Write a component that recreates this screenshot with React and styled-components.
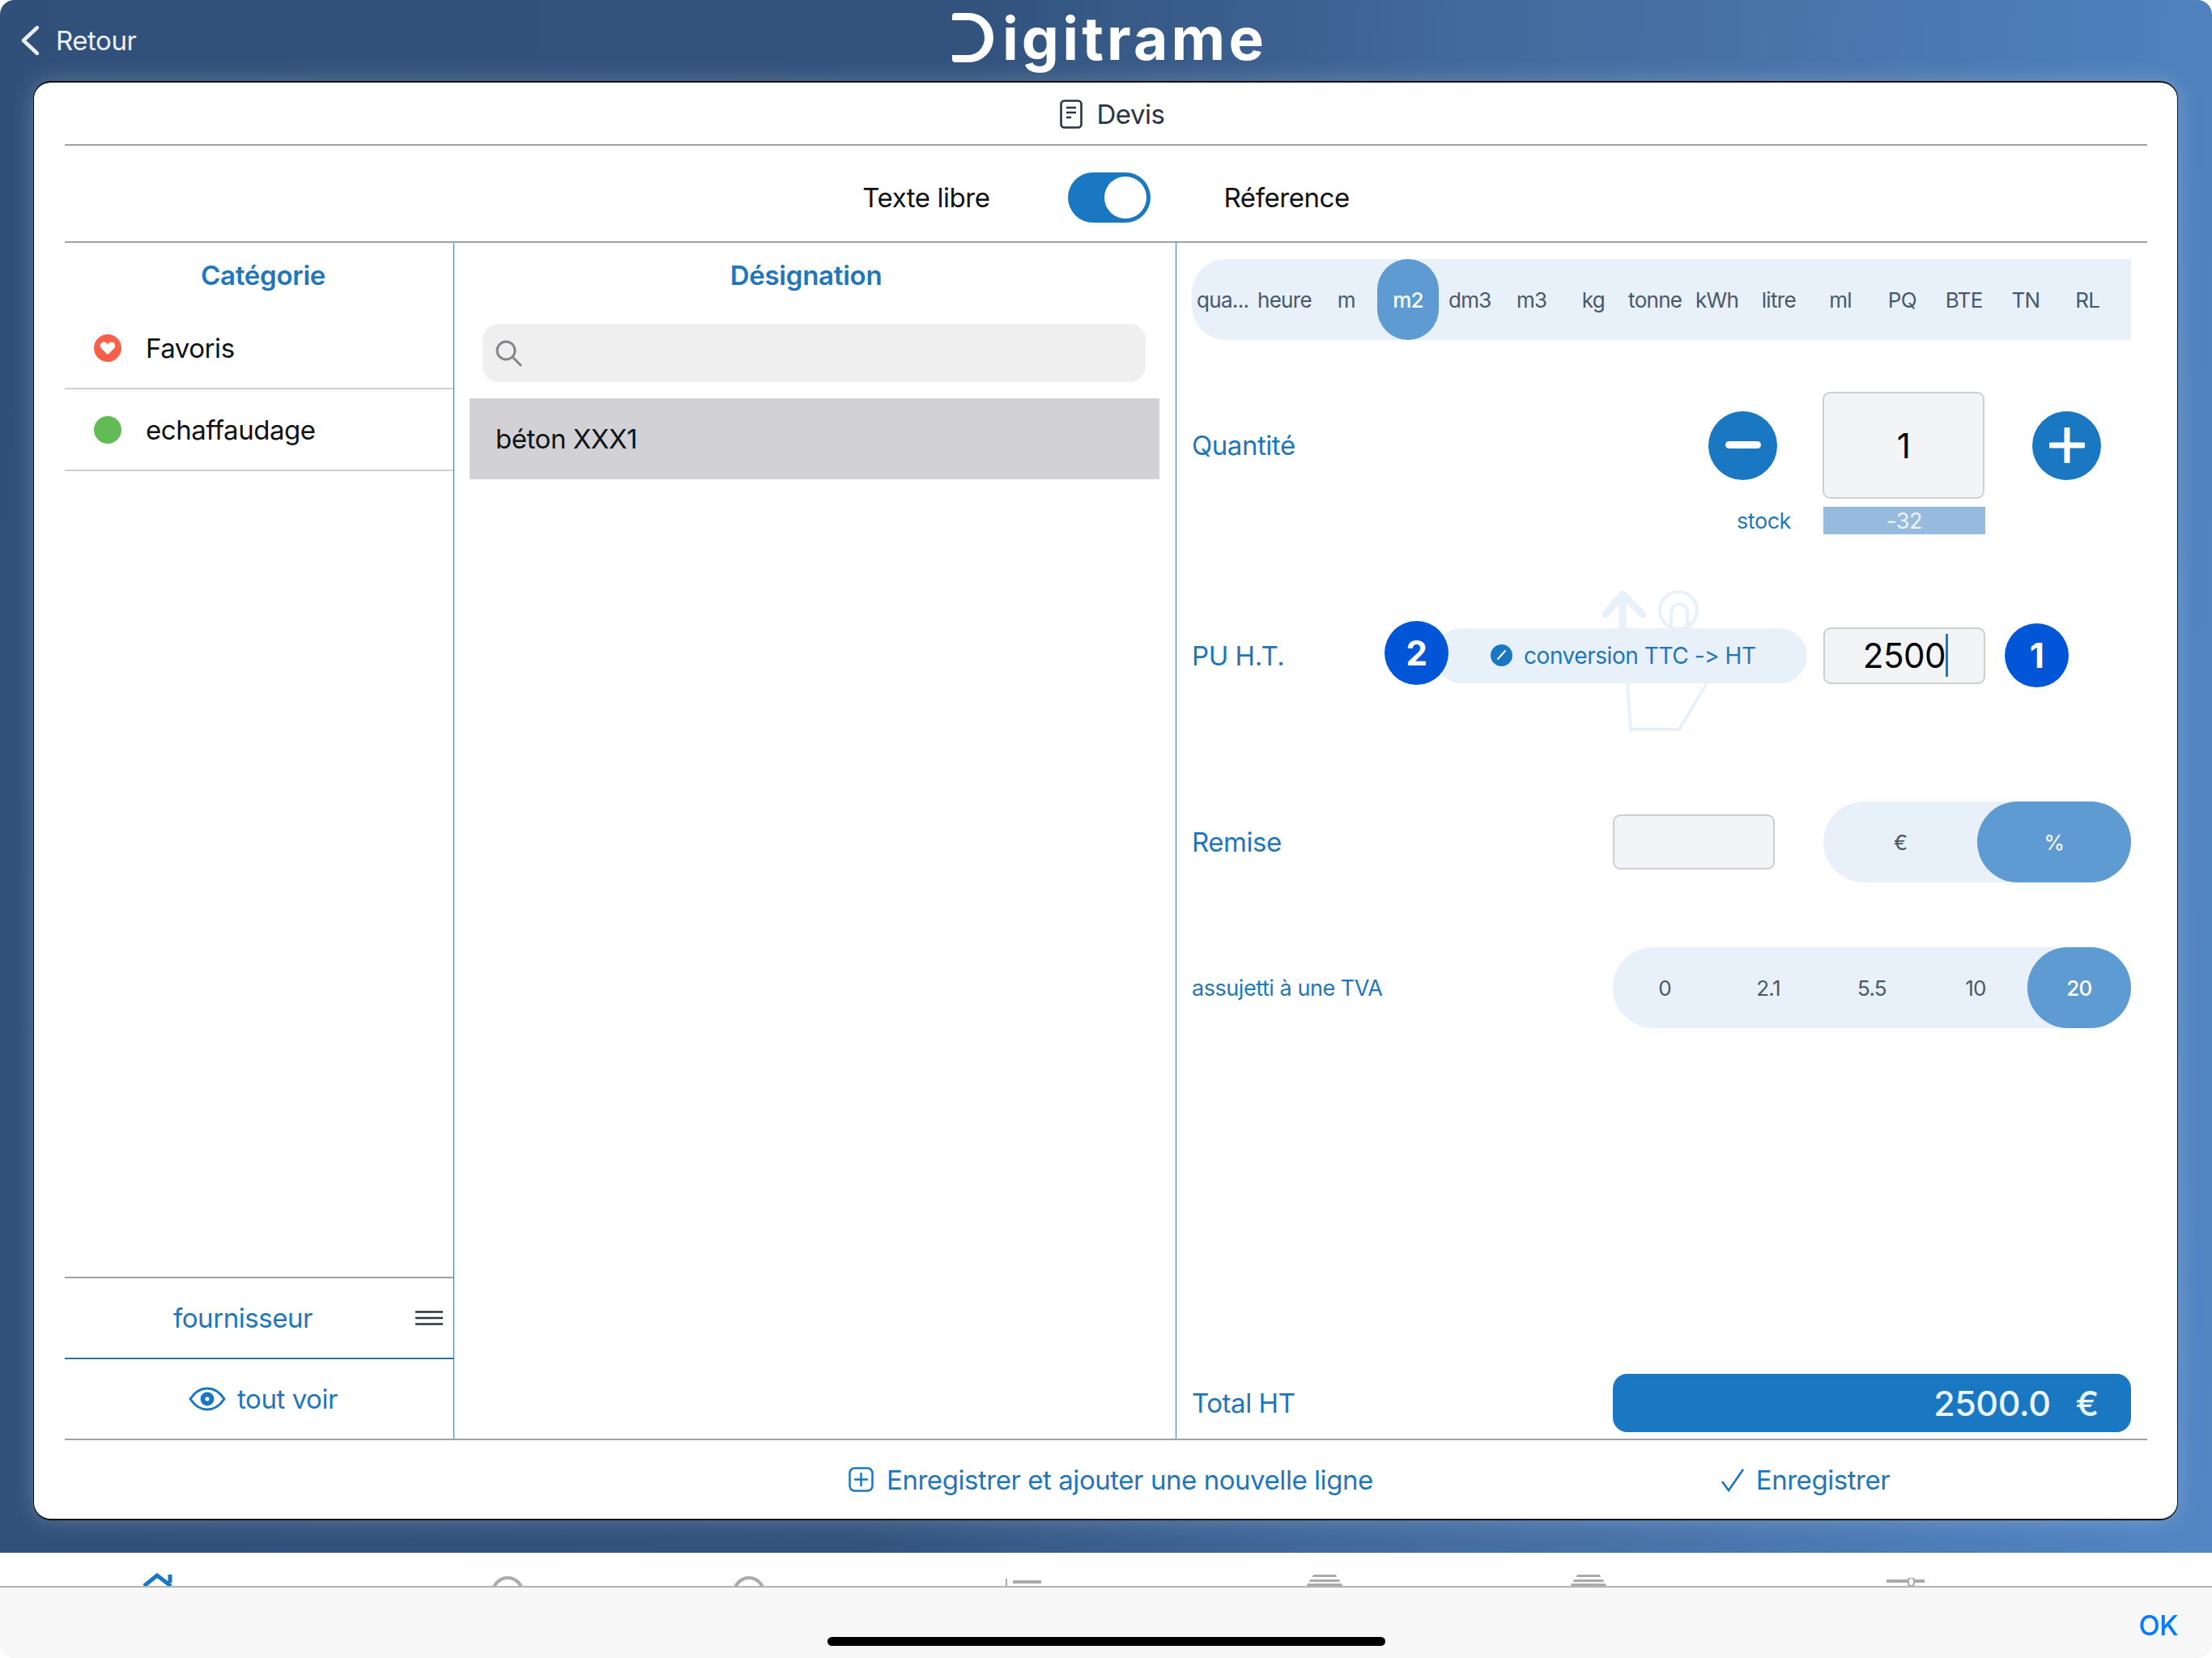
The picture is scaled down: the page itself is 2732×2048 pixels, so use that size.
import React from "react";
import styled, { createGlobalStyle } from "styled-components";

const BLUE = "#1a78c2";
const TEXT_BLUE = "#1f76ba";
const PALE = "#e8f0f9";
const MID_BLUE = "#5f9bd3";

const GlobalStyle = createGlobalStyle`
  html, body {
    margin: 0;
    padding: 0;
    background: #fff;
  }
  body {
    font-family: Inter, "Liberation Sans", sans-serif;
    letter-spacing: -0.45px;
    font-variant-ligatures: none;
    font-feature-settings: "calt" 0, "liga" 0;
    -webkit-font-smoothing: antialiased;
  }
`;

const Screen = styled.div`
  width: 2732px;
  height: 2048px;
  display: flex;
  flex-direction: column;
  border-radius: 18px;
  overflow: hidden;
`;

const Backdrop = styled.div`
  height: 1918px;
  flex: none;
  box-sizing: border-box;
  display: flex;
  flex-direction: column;
  padding: 0 42px 40px 41px;
  background: linear-gradient(95deg, #30507a 0%, #32537e 42%, #42699b 62%, #5286c4 100%);
`;

const TopBar = styled.div`
  height: 100px;
  flex: none;
  display: grid;
  grid-template-columns: 1fr auto 1fr;
  align-items: start;
  margin-left: -41px;
`;

const BackLink = styled.div`
  display: flex;
  align-items: center;
  gap: 21px;
  padding: 32px 0 0 26px;
  height: 36px;
  color: #eaf0f7;
  font-size: 33px;
`;

const Logo = styled.div`
  display: flex;
  align-items: baseline;
  padding-top: 4px;
  margin-left: 51px;
  color: #fff;
  font-weight: 700;
  font-size: 73px;
  line-height: 88px;
  letter-spacing: 4.2px;
`;

const LogoD = styled.span`
  position: relative;
  display: inline-block;
  width: 62px;
  color: transparent;

  &::before {
    content: "";
    position: absolute;
    left: 0;
    bottom: 15px;
    width: 40px;
    height: 43px;
    border: 9px solid #fff;
    border-right-width: 11px;
    border-left: 0;
    border-radius: 4px 32px 32px 4px;
  }
`;

const Card = styled.div`
  flex: 1;
  min-height: 0;
  box-sizing: border-box;
  display: flex;
  flex-direction: column;
  padding: 0 37px 0 38px;
  background: #fff;
  border: 2px solid #111;
  border-width: 2px 1px 2px 1px;
  border-radius: 22px;
  box-shadow: 0 0 28px rgba(255, 255, 255, 0.22);
`;

const TitleRow = styled.div`
  height: 74px;
  flex: none;
  display: flex;
  align-items: center;
  justify-content: center;
  gap: 17px;
  border-bottom: 2px solid #a0a0a0;
  color: #2b3440;
  font-size: 33px;
  padding: 2px 0 0 16px;
`;

const ToggleRow = styled.div`
  height: 108px;
  flex: none;
  display: flex;
  align-items: center;
  justify-content: center;
  padding-top: 10px;
  border-bottom: 2px solid #a0a0a0;
  color: #111;
  font-size: 33px;
`;

const Toggle = styled.div`
  position: relative;
  width: 102px;
  height: 62px;
  margin: 0 91px 0 96px;
  border-radius: 31px;
  background: ${BLUE};

  &::after {
    content: "";
    position: absolute;
    top: 5px;
    right: 5px;
    width: 52px;
    height: 52px;
    border-radius: 50%;
    background: #fff;
  }
`;

const Columns = styled.div`
  flex: 1;
  min-height: 0;
  display: flex;
`;

const LeftColumn = styled.div`
  width: 481px;
  flex: none;
  box-sizing: border-box;
  display: flex;
  flex-direction: column;
  border-right: 1px solid #3f7fb5;
`;

const ColumnTitle = styled.div`
  height: 80px;
  flex: none;
  display: flex;
  align-items: center;
  justify-content: center;
  color: ${TEXT_BLUE};
  font-size: 33px;
  font-weight: 600;
  letter-spacing: -0.25px;
  padding: ${(p) => p.$pad};
`;

const CategoryRow = styled.div`
  height: 99px;
  flex: none;
  display: flex;
  align-items: center;
  gap: 30px;
  padding-left: 36px;
  border-bottom: 2px solid #cfcfcf;
  color: #111;
  font-size: 33px;
`;

const Dot = styled.span`
  width: 34px;
  height: 34px;
  flex: none;
  display: flex;
  align-items: center;
  justify-content: center;
  border-radius: 50%;
  background: ${(p) => p.$color};
`;

const Spacer = styled.div`
  flex: ${(p) => (p.$w ? `0 0 ${p.$w}px` : 1)};
`;

const SideAction = styled.div`
  position: relative;
  height: 98px;
  flex: none;
  display: flex;
  align-items: center;
  justify-content: center;
  gap: 14px;
  border-top: 2px solid ${(p) => p.$line};
  color: ${TEXT_BLUE};
  font-size: 33px;
  padding: 0 ${(p) => p.$right || 0}px 0 ${(p) => p.$left || 0}px;
`;

const MenuIcon = styled.svg`
  position: absolute;
  right: 13px;
  top: 40px;
`;

const MiddleColumn = styled.div`
  width: 892px;
  flex: none;
  box-sizing: border-box;
  display: flex;
  flex-direction: column;
  border-right: 1px solid #3f7fb5;
`;

const SearchBox = styled.div`
  height: 72px;
  flex: none;
  display: flex;
  align-items: center;
  margin: 20px 37px 0 35px;
  padding-left: 15px;
  border-radius: 20px;
  background: #efeff0;
`;

const DesignationRow = styled.div`
  height: 100px;
  flex: none;
  display: flex;
  align-items: center;
  margin: 20px 20px 0 19px;
  padding-left: 32px;
  background: #d1d1d6;
  color: #111;
  font-size: 33px;
`;

const FormColumn = styled.div`
  flex: 1;
  min-width: 0;
  display: flex;
  flex-direction: column;
  padding: 20px 20px 8px 19px;
`;

const UnitBar = styled.div`
  height: 100px;
  flex: none;
  display: flex;
  border-radius: 42px 0 0 42px;
  background: ${PALE};
`;

const Segment = styled.div`
  width: ${(p) => p.$w}px;
  flex: ${(p) => (p.$w ? "none" : 1)};
  height: 100px;
  display: flex;
  align-items: center;
  justify-content: center;
  border-radius: ${(p) => p.$radius || 50}px;
  background: ${(p) => (p.$on ? MID_BLUE : "transparent")};
  color: ${(p) => (p.$on ? "#fff" : "#48586a")};
  font-size: 26px;
  font-weight: ${(p) => (p.$on && p.$bold ? 500 : 400)};
  white-space: nowrap;
  letter-spacing: -0.7px;
`;

const FormRow = styled.div`
  display: flex;
  align-items: center;
  justify-content: ${(p) => (p.$end ? "flex-end" : "flex-start")};
  flex: none;
  margin-top: ${(p) => p.$top}px;
`;

const FormLabel = styled.div`
  flex: 1;
  color: ${TEXT_BLUE};
  font-size: ${(p) => p.$size || 33}px;
`;

const RoundButton = styled.div`
  width: 85px;
  height: 85px;
  flex: none;
  display: flex;
  align-items: center;
  justify-content: center;
  border-radius: 50%;
  background: ${BLUE};
`;

const FieldBox = styled.div`
  width: 200px;
  height: ${(p) => p.$h}px;
  flex: none;
  box-sizing: border-box;
  display: flex;
  align-items: center;
  justify-content: center;
  margin: ${(p) => p.$margin || 0};
  background: #f3f4f6;
  border: 2px solid #cdcfd2;
  border-radius: 9px;
  color: #000;
  font-size: 42px;
`;

const Caret = styled.span`
  width: 3px;
  height: 53px;
  margin-right: -3px;
  background: #1a78c2;
`;

const StockLabel = styled.div`
  color: ${TEXT_BLUE};
  font-size: 27px;
  margin-right: 40px;
`;

const StockValue = styled.div`
  width: 200px;
  height: 34px;
  display: flex;
  align-items: center;
  justify-content: center;
  background: #97bbdf;
  color: #eef4fa;
  font-size: 27px;
  margin-right: 180px;
`;

const PillWrap = styled.div`
  position: relative;
  width: 461px;
  height: 68px;
  flex: none;
  margin-right: 20px;
`;

const ConversionPill = styled.div`
  position: relative;
  height: 68px;
  display: flex;
  align-items: center;
  gap: 14px;
  padding-left: 70px;
  border-radius: 34px;
  background: #e8f1fa;
  color: ${TEXT_BLUE};
  font-size: 28px;
`;

const HintArt = styled.svg`
  position: absolute;
  left: 190px;
  top: -50px;
`;

const StepBadge = styled.div`
  width: 79px;
  height: 79px;
  flex: none;
  display: flex;
  align-items: center;
  justify-content: center;
  margin: ${(p) => p.$margin || 0};
  border-radius: 50%;
  background: #0056d6;
  color: #fff;
  font-size: 42px;
  font-weight: 700;
`;

const LeftBadge = styled(StepBadge)`
  position: absolute;
  left: -61px;
  top: -9px;
`;

const SegmentGroup = styled.div`
  width: ${(p) => p.$w}px;
  flex: none;
  display: flex;
  border-radius: 50px;
  margin-left: ${(p) => p.$left || 0}px;
  background: ${PALE};
`;

const TotalBar = styled.div`
  width: 640px;
  height: 72px;
  box-sizing: border-box;
  display: flex;
  align-items: center;
  justify-content: flex-end;
  gap: 31px;
  padding-right: 40px;
  border-radius: 18px;
  background: ${BLUE};
  color: #e9f4fb;
  font-size: 43px;
  font-weight: 500;
`;

const FooterRow = styled.div`
  height: 97px;
  flex: none;
  display: flex;
  align-items: center;
  border-top: 2px solid #a0a0a0;
  color: ${TEXT_BLUE};
  font-size: 33px;
  padding-left: 968px;
`;

const FooterAction = styled.div`
  display: flex;
  align-items: center;
  gap: ${(p) => p.$gap}px;
  margin-left: ${(p) => p.$left || 0}px;
`;

const TabStrip = styled.div`
  height: 41px;
  flex: none;
  display: flex;
  align-items: flex-end;
  overflow: hidden;
  background: #fff;
  padding-left: 176px;
`;

const TabIcon = styled.svg`
  flex: none;
  margin-left: ${(p) => p.$left || 0}px;
`;

const KeyboardBar = styled.div`
  flex: 1;
  display: flex;
  flex-direction: column;
  align-items: center;
  position: relative;
  border-top: 2px solid #b4b4b4;
  background: #f7f7f7;
`;

const OkButton = styled.div`
  position: absolute;
  right: 42px;
  top: 26px;
  color: #007aff;
  font-size: 34px;
  font-weight: 500;
`;

const HomeIndicator = styled.div`
  width: 689px;
  height: 11px;
  margin-top: 61px;
  border-radius: 6px;
  background: #000;
`;

const units = ["qua...", "heure", "m", "m2", "dm3", "m3", "kg", "tonne", "kWh", "litre", "ml", "PQ", "BTE", "TN", "RL"];
const tvaRates = ["0", "2.1", "5.5", "10", "20"];

const App = () => {
  return (
    <Screen>
      <GlobalStyle />
      <Backdrop>
        <TopBar>
          <BackLink>
            <svg width="22" height="36" viewBox="0 0 22 36" fill="none">
              <path d="M20 2 3 18l17 16" stroke="#eaf0f7" strokeWidth="4.5" strokeLinecap="round" strokeLinejoin="round" />
            </svg>
            Retour
          </BackLink>
          <Logo>
            <LogoD>D</LogoD>igitrame
          </Logo>
        </TopBar>

        <Card>
          <TitleRow>
            <svg width="28" height="36" viewBox="0 0 28 36" fill="none" stroke="#2b3440" strokeWidth="2.6">
              <rect x="1.5" y="1.5" width="25" height="33" rx="4" />
              <path d="M8 10h12M8 16h12M8 22h6" />
            </svg>
            Devis
          </TitleRow>

          <ToggleRow>
            Texte libre
            <Toggle />
            Réference
          </ToggleRow>

          <Columns>
            <LeftColumn>
              <ColumnTitle $pad="0 0 0 10px">Catégorie</ColumnTitle>
              <CategoryRow>
                <Dot $color="#f9604a">
                  <svg width="20" height="18" viewBox="0 0 20 18">
                    <path d="M10 17 2.2 9.6C-.6 6.8 1 1.5 5.2 1.5c2.2 0 3.8 1.2 4.8 3 1-1.8 2.6-3 4.8-3 4.2 0 5.8 5.3 3 8.1z" fill="#fff" />
                  </svg>
                </Dot>
                Favoris
              </CategoryRow>
              <CategoryRow>
                <Dot $color="#62bb55" />
                echaffaudage
              </CategoryRow>
              <Spacer />
              <SideAction $line="#a0a0a0" $right={40}>
                fournisseur
                <MenuIcon width="34" height="18" viewBox="0 0 34 18" stroke="#2b3440" strokeWidth="2.6">
                  <path d="M0 1.5h34M0 9h34M0 16.5h34" />
                </MenuIcon>
              </SideAction>
              <SideAction $line="#2f6fad" $left={10}>
                <svg width="46" height="30" viewBox="0 0 46 30" fill="none">
                  <path d="M2 15C8 6 15 2 23 2s15 4 21 13c-6 9-13 13-21 13S8 24 2 15z" stroke={BLUE} strokeWidth="3" />
                  <circle cx="23" cy="15" r="8.5" fill={BLUE} />
                  <circle cx="23" cy="15" r="2.6" fill="#fff" />
                </svg>
                tout voir
              </SideAction>
            </LeftColumn>

            <MiddleColumn>
              <ColumnTitle $pad="0 22px 0 0">Désignation</ColumnTitle>
              <SearchBox>
                <svg width="34" height="34" viewBox="0 0 34 34" fill="none" stroke="#85858a" strokeWidth="3">
                  <circle cx="14" cy="14" r="11" />
                  <path d="m22 22 10 10" strokeLinecap="round" />
                </svg>
              </SearchBox>
              <DesignationRow>béton XXX1</DesignationRow>
            </MiddleColumn>

            <FormColumn>
              <UnitBar>
                {units.map((unit) => (
                  <Segment key={unit} $w={76.3} $radius={38} $on={unit === "m2"} $bold>
                    {unit}
                  </Segment>
                ))}
              </UnitBar>

              <FormRow $top={64}>
                <FormLabel>Quantité</FormLabel>
                <RoundButton>
                  <svg width="44" height="10" viewBox="0 0 44 10">
                    <rect width="44" height="9" rx="4.5" fill="#fff" />
                  </svg>
                </RoundButton>
                <FieldBox $h={132} $margin="0 59px 0 56px">
                  1
                </FieldBox>
                <RoundButton>
                  <svg width="44" height="44" viewBox="0 0 44 44">
                    <path d="M22 2v40M2 22h40" stroke="#fff" strokeWidth="7" strokeLinecap="round" />
                  </svg>
                </RoundButton>
                <Spacer $w={37} />
              </FormRow>

              <FormRow $top={10} $end>
                <StockLabel>stock</StockLabel>
                <StockValue>-32</StockValue>
              </FormRow>

              <FormRow $top={110}>
                <FormLabel>PU H.T.</FormLabel>
                <PillWrap>
                  <HintArt width="160" height="180" viewBox="0 0 160 180" fill="none" stroke="#e8f1fa">
                    <path d="M43 60V8M22 33 43 8l25 25" strokeWidth="9" strokeLinecap="round" strokeLinejoin="round" />
                    <circle cx="112" cy="28" r="23" strokeWidth="4" />
                    <path d="M103 60V30a10 10 0 0 1 20 0v30" strokeWidth="4" />
                    <path d="M49 118 53 175h60l34-57" strokeWidth="4" />
                  </HintArt>
                  <ConversionPill>
                    <svg width="27" height="27" viewBox="0 0 27 27">
                      <circle cx="13.5" cy="13.5" r="13.5" fill={BLUE} />
                      <path d="m9 18 9-10" stroke="#fff" strokeWidth="2" strokeLinecap="round" />
                    </svg>
                    conversion TTC -&gt; HT
                  </ConversionPill>
                  <LeftBadge>2</LeftBadge>
                </PillWrap>
                <FieldBox $h={70}>
                  2500
                  <Caret />
                </FieldBox>
                <StepBadge $margin="0 77px 0 24px">1</StepBadge>
              </FormRow>

              <FormRow $top={141}>
                <FormLabel>Remise</FormLabel>
                <FieldBox $h={68} />
                <SegmentGroup $w={380} $left={60}>
                  <Segment>€</Segment>
                  <Segment $on>%</Segment>
                </SegmentGroup>
              </FormRow>

              <FormRow $top={80}>
                <FormLabel $size={27}>assujetti à une TVA</FormLabel>
                <SegmentGroup $w={640}>
                  {tvaRates.map((rate) => (
                    <Segment key={rate} $on={rate === "20"} $bold>
                      {rate}
                    </Segment>
                  ))}
                </SegmentGroup>
              </FormRow>

              <Spacer />

              <FormRow $top={0}>
                <FormLabel>Total HT</FormLabel>
                <TotalBar>
                  <span>2500.0</span>
                  <span>€</span>
                </TotalBar>
              </FormRow>
            </FormColumn>
          </Columns>

          <FooterRow>
            <FooterAction $gap={16}>
              <svg width="31" height="31" viewBox="0 0 31 31" fill="none" stroke={BLUE} strokeWidth="2.5">
                <rect x="1.5" y="1.5" width="28" height="28" rx="6" />
                <path d="M15.5 8v15M8 15.5h15" strokeLinecap="round" />
              </svg>
              Enregistrer et ajouter une nouvelle ligne
            </FooterAction>
            <FooterAction $gap={14} $left={429}>
              <svg width="30" height="30" viewBox="0 0 30 30" fill="none" stroke={BLUE} strokeWidth="2.6">
                <path d="m2 17 8 11L28 2" />
              </svg>
              Enregistrer
            </FooterAction>
          </FooterRow>
        </Card>
      </Backdrop>

      <TabStrip>
        <TabIcon width="40" height="16" viewBox="0 0 40 16" fill="none" stroke={BLUE} strokeWidth="5">
          <path d="M2 16 18 3l17 13M34 12V2" />
        </TabIcon>
        <TabIcon width="40" height="12" viewBox="0 0 40 12" fill="none" stroke="#aaa" strokeWidth="4" $left={391}>
          <circle cx="20" cy="20" r="18" />
        </TabIcon>
        <TabIcon width="40" height="12" viewBox="0 0 40 12" fill="none" stroke="#aaa" strokeWidth="4" $left={258}>
          <circle cx="20" cy="20" r="18" />
        </TabIcon>
        <TabIcon width="45" height="9" viewBox="0 0 45 9" fill="#aaa" $left={296}>
          <rect x="1" y="0" width="2" height="9" />
          <rect x="10" y="2" width="35" height="4" />
        </TabIcon>
        <TabIcon width="45" height="14" viewBox="0 0 45 14" fill="#aaa" $left={328}>
          <path d="M8 0h28l1 3H7zM4 6h36l1 3H3zM1 11h42l1 3H0z" />
        </TabIcon>
        <TabIcon width="45" height="14" viewBox="0 0 45 14" fill="#aaa" $left={281}>
          <path d="M8 0h28l1 3H7zM4 6h36l1 3H3zM1 11h42l1 3H0z" />
        </TabIcon>
        <TabIcon width="47" height="10" viewBox="0 0 47 10" $left={345}>
          <rect x="0" y="2" width="47" height="4" fill="#aaa" />
          <rect x="27" y="0" width="7" height="10" rx="3" fill="#fff" stroke="#aaa" strokeWidth="2" />
        </TabIcon>
      </TabStrip>

      <KeyboardBar>
        <OkButton>OK</OkButton>
        <HomeIndicator />
      </KeyboardBar>
    </Screen>
  );
};

export default App;
